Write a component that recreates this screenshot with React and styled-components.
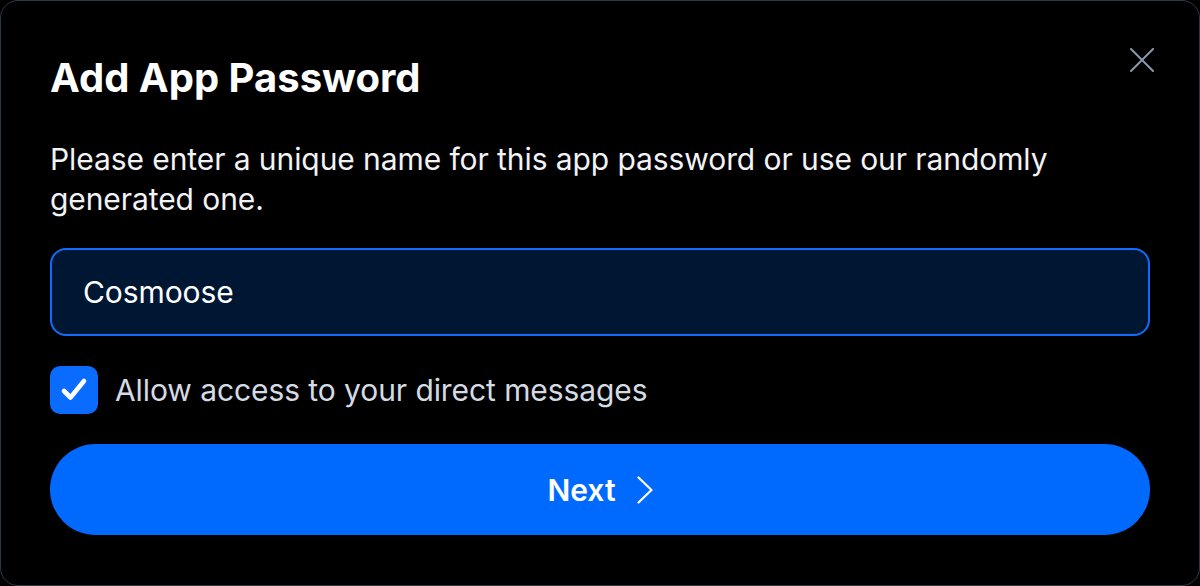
import styled, { createGlobalStyle } from 'styled-components';

const GlobalStyle = createGlobalStyle`
  html, body {
    margin: 0;
    padding: 0;
    background: #000;
  }
  * {
    box-sizing: border-box;
  }
`;

const CloseIcon = () => (
  <svg width="24" height="24" viewBox="0 0 24 24" fill="none" stroke="currentColor" strokeWidth="2" strokeLinecap="round">
    <path d="M1 1l22 22M23 1L1 23" />
  </svg>
);

const CheckIcon = () => (
  <svg width="28" height="28" viewBox="0 0 28 28" fill="none" stroke="#fff" strokeWidth="4.6" strokeLinecap="round" strokeLinejoin="round">
    <path d="M4 15l6.5 6.5L24 5" />
  </svg>
);

const ChevronIcon = () => (
  <svg width="16" height="28" viewBox="0 0 16 28" fill="none" stroke="#fff" strokeWidth="2.2" strokeLinecap="round" strokeLinejoin="round">
    <path d="M1.5 1.5l13 12.5L1.5 26.5" />
  </svg>
);

const App = () => {
  return (
    <>
      <GlobalStyle />
      <Dialog>
        <CloseButton aria-label="Close">
          <CloseIcon />
        </CloseButton>
        <Title>Add App Password</Title>
        <Description>
          Please enter a unique name for this app password or use our randomly generated one.
        </Description>
        <NameInput defaultValue="Cosmoose" />
        <CheckRow>
          <CheckBox>
            <CheckIcon />
          </CheckBox>
          <CheckLabel>Allow access to your direct messages</CheckLabel>
        </CheckRow>
        <NextButton>
          Next
          <ChevronIcon />
        </NextButton>
      </Dialog>
    </>
  );
};

const Dialog = styled.div`
  position: relative;
  width: 1200px;
  height: 586px;
  padding: 53px 49px 0;
  background: #000;
  border: 1px solid #2e3947;
  border-radius: 18px;
  font-family: Inter, 'Noto Sans', sans-serif;
  color: #fff;
  display: flex;
  flex-direction: column;
`;

const CloseButton = styled.button`
  position: absolute;
  top: 47px;
  right: 45px;
  padding: 0;
  border: none;
  background: none;
  color: #8a98ad;
  display: flex;
`;

const Title = styled.h1`
  margin: 0;
  font-size: 40px;
  line-height: 48px;
  font-weight: 700;
`;

const Description = styled.p`
  margin: 37px 0 0;
  font-size: 30px;
  line-height: 40px;
  letter-spacing: -0.08px;
  font-weight: 400;
  color: #f1f3f5;
`;

const NameInput = styled.input`
  margin-top: 29px;
  height: 88px;
  width: 100%;
  padding: 0 31px;
  background: #001733;
  border: 2px solid #106cfa;
  border-radius: 16px;
  font-family: inherit;
  font-size: 30px;
  letter-spacing: -0.08px;
  color: #fff;
  outline: none;
`;

const CheckRow = styled.div`
  margin-top: 30px;
  display: flex;
  align-items: center;
  gap: 17px;
`;

const CheckBox = styled.div`
  width: 48px;
  height: 48px;
  border-radius: 10px;
  background: #0a6cff;
  display: flex;
  align-items: center;
  justify-content: center;
`;

const CheckLabel = styled.span`
  font-size: 30px;
  letter-spacing: -0.08px;
  color: #d4dbe3;
`;

const NextButton = styled.button`
  margin-top: 30px;
  height: 91px;
  width: 100%;
  border: none;
  border-radius: 46px;
  background: #006aff;
  color: #fff;
  font-family: inherit;
  font-size: 30px;
  font-weight: 600;
  display: flex;
  align-items: center;
  justify-content: center;
  gap: 21px;
`;

export default App;
